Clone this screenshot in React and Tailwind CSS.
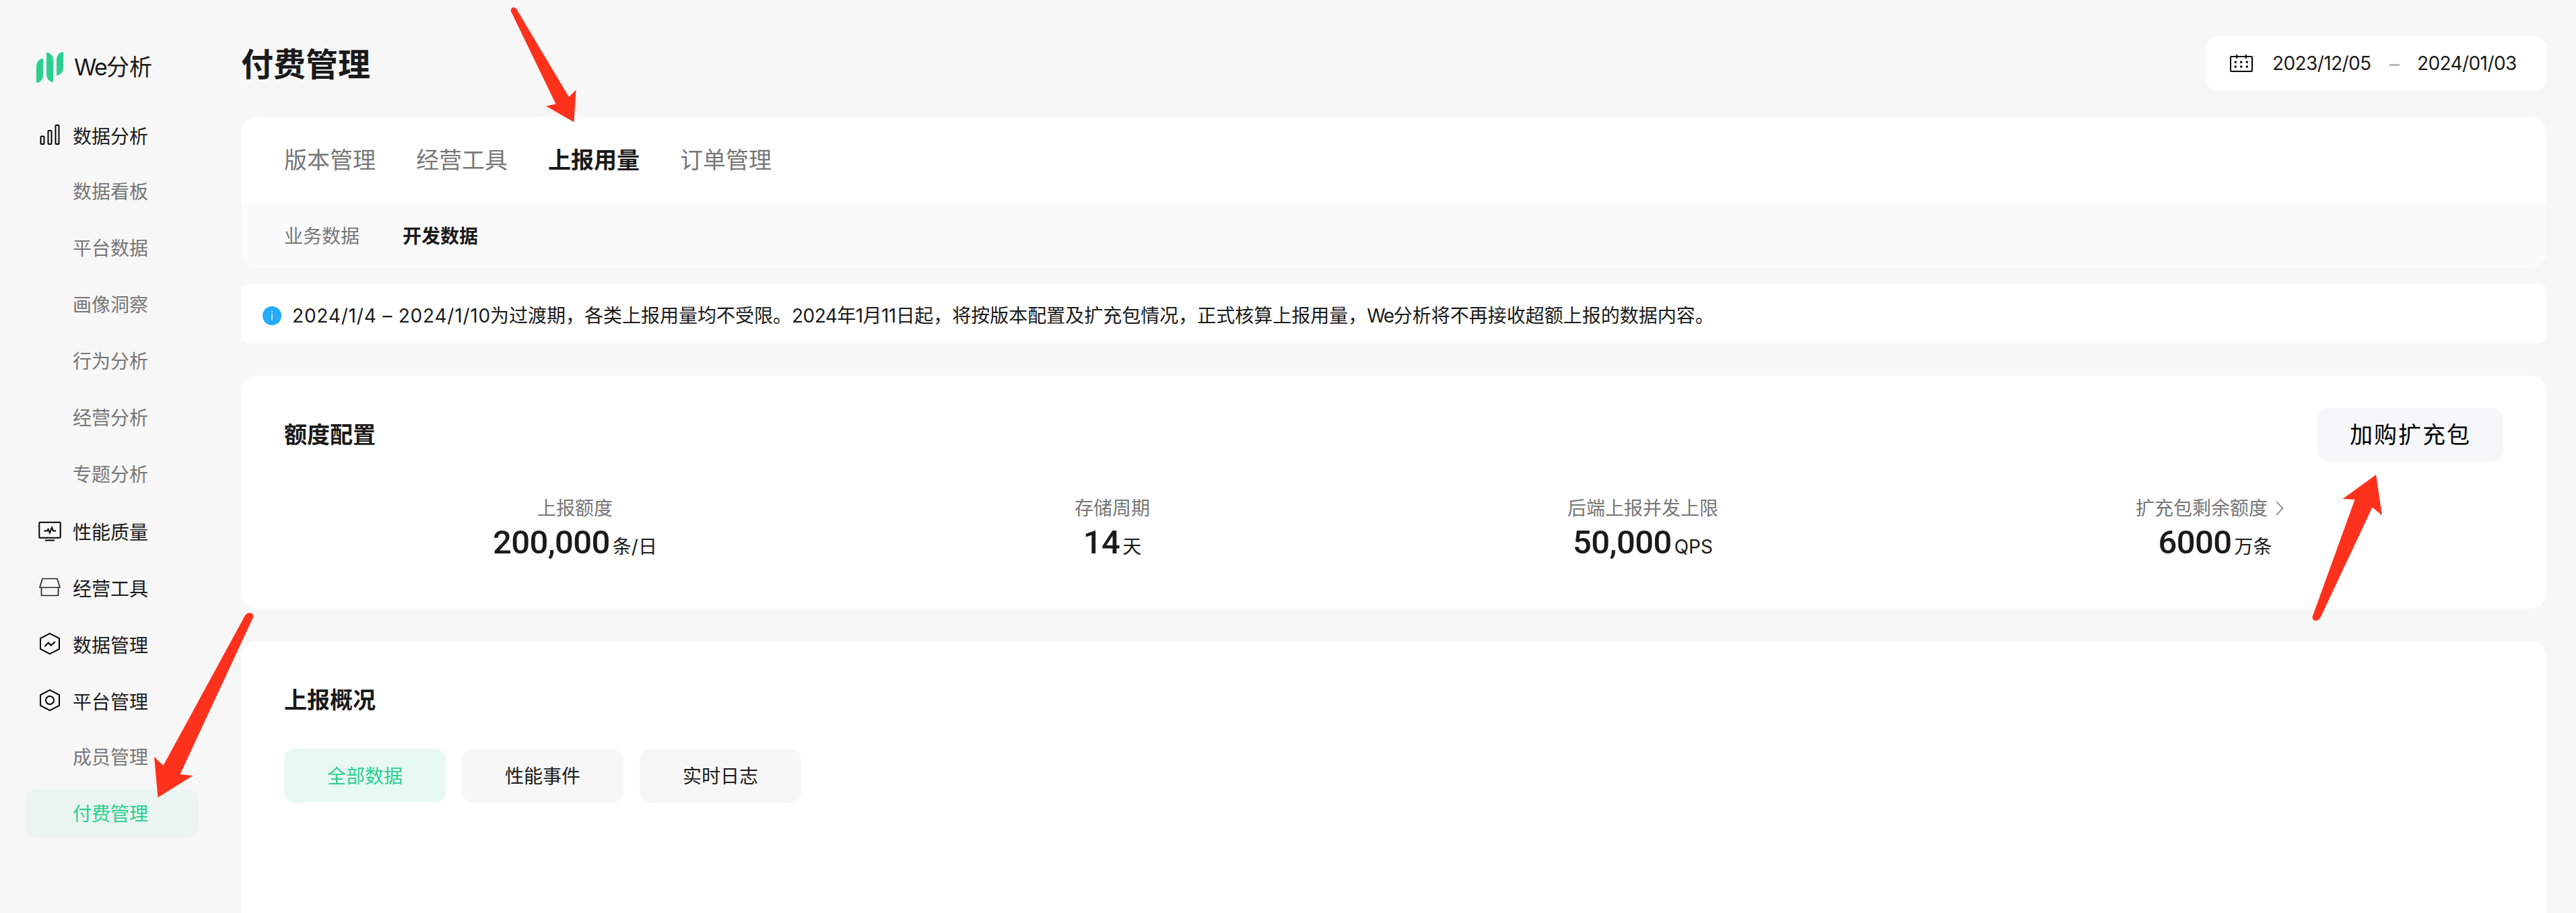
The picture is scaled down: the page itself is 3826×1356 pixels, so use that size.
import clsx from 'clsx';

const MENU = [
  {
    label: '数据分析',
    icon: BarsIcon,
    children: ['数据看板', '平台数据', '画像洞察', '行为分析', '经营分析', '专题分析'],
  },
  { label: '性能质量', icon: MonitorIcon },
  { label: '经营工具', icon: ShopIcon },
  { label: '数据管理', icon: TrendHexIcon },
  { label: '平台管理', icon: SettingHexIcon, children: ['成员管理', '付费管理'] },
];

const TABS = ['版本管理', '经营工具', '上报用量', '订单管理'];
const SUB_TABS = ['业务数据', '开发数据'];
const FILTERS = ['全部数据', '性能事件', '实时日志'];

const QUOTAS = [
  { label: '上报额度', value: '200,000', unit: '条/日' },
  { label: '存储周期', value: '14', unit: '天' },
  { label: '后端上报并发上限', value: '50,000', unit: 'QPS' },
  { label: '扩充包剩余额度', value: '6000', unit: '万条', link: true },
];

function Logo() {
  return (
    <svg width="40" height="46" viewBox="0 0 40 46" fill="#2acf90" className="shrink-0">
      <path d="M0 22C0 15 4 10.500 10 10V34C10 41 6 45.500 0 46Z" />
      <path d="M15 1C21 1.500 25 6 25 13V45C19 44.500 15 40 15 33Z" />
      <path d="M30 12C30 5 34 .500 40 0V23C40 30 36 34.500 30 35Z" />
    </svg>
  );
}

function BarsIcon() {
  return (
    <svg width="36" height="36" viewBox="0 0 36 36" fill="none" stroke="#000" strokeWidth="2">
      <rect x="4.500" y="20.500" width="5" height="11.500" rx="1" />
      <rect x="15.500" y="12" width="5" height="20" rx="1" />
      <rect x="26.500" y="4" width="5" height="28" rx="1" />
    </svg>
  );
}

function MonitorIcon() {
  return (
    <svg width="36" height="36" viewBox="0 0 36 36" fill="none" stroke="#000" strokeWidth="2">
      <rect x="2.300" y="5.800" width="31.400" height="23" rx="1" />
      <path d="M9.500 18.500H14L15.500 16L18 21.500L21 13.500L23 18.500H27M11 32.500H25" />
    </svg>
  );
}

function ShopIcon() {
  return (
    <svg width="36" height="36" viewBox="0 0 36 36" fill="none" stroke="#222" strokeWidth="1.700" strokeLinejoin="round">
      <path d="M7 5.500H29L33 18.500H3ZM5.500 18.500V29.500Q5.500 30.500 6.500 30.500H29.500Q30.500 30.500 30.500 29.500V18.500" />
    </svg>
  );
}

function TrendHexIcon() {
  return (
    <svg width="36" height="36" viewBox="0 0 36 36" fill="none" stroke="#000" strokeWidth="2">
      <path d="M18 2.800L32 10V26L18 33.200L4 26V10Z" />
      <path d="M10.500 22L16 16.500L19.500 20.500L26 15" />
    </svg>
  );
}

function SettingHexIcon() {
  return (
    <svg width="36" height="36" viewBox="0 0 36 36" fill="none" stroke="#000" strokeWidth="2">
      <path d="M18 2.800L32 10V26L18 33.200L4 26V10Z" />
      <circle cx="18" cy="18" r="6" />
    </svg>
  );
}

function CalendarIcon() {
  return (
    <svg width="36" height="32" viewBox="0 0 36 32" fill="none" stroke="#000" strokeWidth="2">
      <rect x="2" y="6" width="32" height="22" rx="1" />
      <path d="M11.300 3V9M24.700 3V9" />
      <path strokeWidth="3" d="M7.800 14.300H10.800M16.200 14.300H19.200M24.800 14.300H27.800M7.800 21H10.800M16.200 21H19.200M24.800 21H27.800" />
    </svg>
  );
}

function SideMenu() {
  return (
    <aside className="flex w-[358px] shrink-0 flex-col pl-[38px] pt-[72px]">
      <div className="flex h-14 items-center gap-4 pl-4">
        <Logo />
        <span className="text-[34px] leading-none">
          <span className="tracking-[-1.800px]">We</span>分析
        </span>
      </div>
      <nav className="mt-9 flex w-64 flex-col gap-3">
        {MENU.map(({ label, icon: Icon, children = [] }) => (
          <div key={label} className="flex flex-col gap-3">
            <div className="flex h-[72px] items-center gap-4 pl-[18px]">
              <Icon />
              <span className="pt-[5px]">{label}</span>
            </div>
            {children.map((child) => (
              <a
                key={child}
                className={clsx(
                  'flex h-[72px] items-center rounded-2xl pl-[70px] pt-0.5',
                  child === '付费管理' ? 'bg-[#eaf4f1] text-[#2acf90]' : 'text-[#767676]',
                )}
              >
                {child}
              </a>
            ))}
          </div>
        ))}
      </nav>
    </aside>
  );
}

function Quota({ label, value, unit, link }) {
  return (
    <div className="flex flex-col items-center">
      <div className="flex h-10 items-center pt-0.5 text-[#767676]">
        {label}
        {link && (
          <svg width="40" height="28" viewBox="0 0 40 28" fill="none" stroke="#767676" strokeWidth="1.500">
            <path d="M13 4L22.500 14L13 24" />
          </svg>
        )}
      </div>
      <div className="flex h-16 items-baseline gap-1">
        <span className="font-[Roboto,sans-serif] text-[49px] font-medium leading-[64px] tracking-[-0.600px]">
          {value}
        </span>
        <span>{unit}</span>
      </div>
    </div>
  );
}

// Red pointers laid over the page
function Arrows() {
  return (
    <svg
      className="pointer-events-none absolute left-0 top-0"
      width="3826"
      height="1356"
      viewBox="0 0 3826 1356"
      fill="#fe311d"
    >
      <path d="M759 17C757 11 765 8 768 15L845 144L855.500 133.500L852.500 181.500L811 157.500L825.500 154.500Z" />
      <path d="M363.500 915C368 907 379 910 375.500 918L267.500 1150L286.500 1152L234.500 1184.500L229 1124L242.500 1137Z" />
      <path d="M3434.500 916C3434 923 3443 924 3446.500 917L3523.500 753.500L3538 765.500L3529 705L3479.500 741L3497.500 742Z" />
    </svg>
  );
}

export default function App() {
  return (
    <div className="relative flex h-[1356px] w-[3826px] overflow-hidden bg-[#f7f7f7] font-[Inter,'Noto_Sans_CJK_SC',sans-serif] text-[28px] leading-10 text-[#1a1a1a]">
      <SideMenu />
      <main className="flex w-[3424px] flex-col">
        <header className="flex h-[174px] items-start justify-between pt-[54px]">
          <h1 className="pt-0.5 text-[48px] font-bold leading-[80px]">付费管理</h1>
          <div className="flex h-20 w-[505px] items-center rounded-2xl bg-white pl-[34px]">
            <CalendarIcon />
            <span className="ml-7 w-[148px] whitespace-nowrap tracking-[-0.600px]">2023/12/05</span>
            <span className="mx-[26px] mt-[5px] h-[3px] w-[15px] bg-[#b8b8b8]" />
            <span className="whitespace-nowrap tracking-[-0.600px]">2024/01/03</span>
          </div>
        </header>

        <section className="overflow-hidden rounded-3xl bg-white">
          <div className="flex h-32 items-center gap-[60px] px-16 text-[34px]">
            {TABS.map((tab) => (
              <span key={tab} className={tab === '上报用量' ? 'font-bold' : 'text-[#767676]'}>
                {tab}
              </span>
            ))}
          </div>
          <div className="flex h-24 items-center gap-16 bg-[#fbfbfb] px-16 pt-0.5">
            {SUB_TABS.map((tab) => (
              <span key={tab} className={tab === '开发数据' ? 'font-bold' : 'text-[#767676]'}>
                {tab}
              </span>
            ))}
          </div>
        </section>

        <div className="mt-6 flex h-[88px] shrink-0 items-center gap-4 rounded-xl bg-white px-8 pt-1.5">
          <svg width="28" height="28" viewBox="0 0 28 28" className="shrink-0">
            <circle cx="14" cy="14" r="14" fill="#27acfb" />
            <path d="M14 11.500V20.500M14 7.500V9.500" stroke="#d8f0ff" strokeWidth="1.600" />
          </svg>
          <p className="whitespace-nowrap">
            <span className="inline-block w-[294px] tracking-[0.800px]">2024/1/4 – 2024/1/10</span>
            为过渡期，各类上报用量均不受限。<span className="tracking-[-0.550px]">2024年1月11日</span>起，将按版本配置及扩充包情况，正式核算上报用量，
            <span className="tracking-[-1.500px]">We</span>分析将不再接收超额上报的数据内容。
          </p>
        </div>

        <section className="mt-12 flex h-[346px] shrink-0 flex-col rounded-3xl bg-white px-16 pt-12">
          <div className="flex h-20 items-center justify-between">
            <h2 className="text-[34px] font-bold">额度配置</h2>
            <button
              type="button"
              className="h-20 w-[276px] rounded-2xl bg-[#f6f7f9] text-[34px] tracking-[2px] text-black"
            >
              加购扩充包
            </button>
          </div>
          <div className="mt-12 flex justify-around">
            {QUOTAS.map((quota) => (
              <Quota key={quota.label} {...quota} />
            ))}
          </div>
        </section>

        <section className="mt-12 flex-1 rounded-t-3xl bg-white px-16 pt-[68px]">
          <h2 className="text-[34px] font-bold">上报概况</h2>
          <div className="mt-[52px] flex gap-6">
            {FILTERS.map((filter, i) => (
              <button
                key={filter}
                type="button"
                className={clsx(
                  'h-20 w-60 rounded-2xl pt-0.5',
                  i === 0 ? 'bg-[#e8f9f3] text-[#2acf90]' : 'bg-[#f7f7f7]',
                )}
              >
                {filter}
              </button>
            ))}
          </div>
        </section>
      </main>
      <Arrows />
    </div>
  );
}
